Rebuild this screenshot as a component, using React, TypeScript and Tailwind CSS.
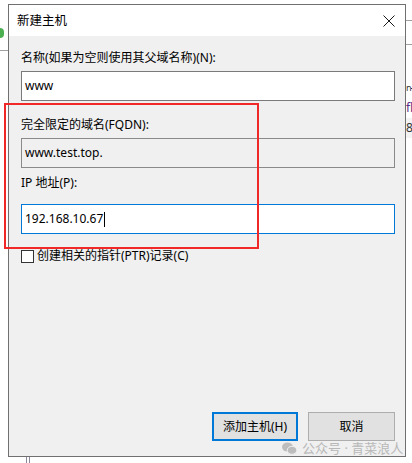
import React from 'react';

const font = { fontFamily: '"Noto Sans", "Noto Sans CJK SC", sans-serif' };

function CloseIcon() {
    return (
        <svg width="12" height="12" viewBox="0 0 12 12" className="block">
            <path d="M0.5 0.5 L11.5 11.5 M11.5 0.5 L0.5 11.5" stroke="#1a1a1a" strokeWidth="1" fill="none" />
        </svg>
    );
}

function WeChatIcon() {
    return (
        <svg width="15" height="13" viewBox="0 0 15 13" className="block">
            <ellipse cx="5.5" cy="5" rx="5.5" ry="4.6" fill="#bdbdbd" />
            <ellipse cx="10" cy="8.3" rx="4.8" ry="4" fill="#bdbdbd" stroke="#f0f0f0" strokeWidth="1" />
        </svg>
    );
}

export default function App() {
    return (
        <div className="relative w-[412px] h-[463px] bg-white overflow-hidden text-[12px] text-black" style={font}>
            {/* Bits of the window behind */}
            <div className="absolute left-0 top-[28px] w-[4px] h-[10px] bg-[#4caf50] rounded-r-sm" />
            <div className="absolute left-0 top-[50px] w-[8px] h-px bg-[#a0a0a0]" />
            <div className="absolute left-[406px] top-[20px] w-[6px] h-px bg-[#a0a0a0]" />
            <div className="absolute left-[406px] top-[44px] w-[6px] h-px bg-[#a0a0a0]" />
            <div className="absolute left-[406px] top-[81px] text-[9px] leading-[14px] text-[#333]">n</div>
            <div className="absolute left-[411px] top-[88px] w-px h-px bg-[#333]" />
            <div className="absolute left-[406px] top-[100px] text-[12px] leading-[16px] text-[#5a2d82]">fl</div>
            <div className="absolute left-[406px] top-[118px] w-[6px] h-[20px] bg-[#f3f3f3] text-[12px] leading-[20px] text-[#333]">8</div>
            <div className="absolute left-[26px] top-[457px] w-px h-[6px] bg-[#8a8a9a]" />
            <div className="absolute left-[29px] top-[457px] w-px h-[6px] bg-[#8a8a9a]" />

            {/* Dialog */}
            <div className="ml-[8px] mt-[4px] w-[398px] h-[453px] border border-[#707070] flex flex-col bg-[#f0f0f0]">
                <div className="h-[31px] bg-white flex items-center justify-between pl-[8px] pr-[10px] shrink-0">
                    <span className="text-[12.5px] leading-[16px]">新建主机</span>
                    <CloseIcon />
                </div>

                <div className="flex-1 flex flex-col px-[12px] pr-[10px] pt-[14px]">
                    <label className="leading-[16px] h-[16px]">名称(如果为空则使用其父域名称)(N):</label>
                    <div className="mt-[5px] h-[30px] bg-white border border-[#7a7a7a] flex items-center px-[3px]">
                        <span className="text-[12px]">www</span>
                    </div>

                    <label className="mt-[16px] leading-[16px] h-[16px]">完全限定的域名(FQDN):</label>
                    <div className="mt-[5px] h-[30px] bg-[#f0f0f0] border border-[#8a8a8a] flex items-center px-[3px]">
                        <span>www.test.top.</span>
                    </div>

                    <label className="mt-[7px] leading-[16px] h-[16px]">IP 地址(P):</label>
                    <div className="mt-[13px] h-[30px] bg-white border border-[#0078d7] flex items-center px-[3px]">
                        <span>192.168.10.67</span>
                        <span className="ml-px w-px h-[15px] bg-black" />
                    </div>

                    <div className="mt-[14px] flex items-center gap-[3px]">
                        <span className="w-[13px] h-[13px] border border-[#333] bg-white shrink-0" />
                        <span className="leading-[16px]">创建相关的指针(PTR)记录(C)</span>
                    </div>

                    <div className="mt-auto mb-[15px] flex justify-end gap-[10px]">
                        <button className="w-[86px] h-[29px] border-2 border-[#0078d7] bg-[#e1e1e1] text-[12px]">添加主机(H)</button>
                        <button className="w-[87px] h-[29px] border border-[#adadad] bg-[#e1e1e1] text-[12px]">取消</button>
                    </div>
                </div>
            </div>

            {/* Red highlight */}
            <div className="absolute left-[4px] top-[103px] w-[255px] h-[146px] border-2 border-[#f02828]" />

            {/* Watermark */}
            <div className="absolute left-[282px] top-[440px] flex items-center gap-[5px] text-[#b8b8b8] text-[13px] leading-[16px]">
                <WeChatIcon />
                <span>公众号 · 青菜浪人</span>
            </div>
        </div>
    );
}
